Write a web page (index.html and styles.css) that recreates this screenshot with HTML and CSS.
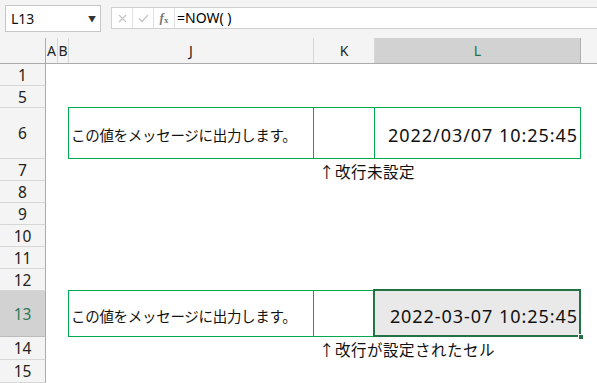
FILE: index.html
```html
<!DOCTYPE html>
<html lang="ja">
<head>
    <meta charset="UTF-8">
    <title>Book1 - Excel</title>
    <link rel="stylesheet" href="styles.css">
</head>
<body>

    <!--  Name box + formula bar  -->
    <div class="formula-bar">
        <div class="name-box">
            <span>L13</span>
            <span class="caret">&#9660;</span>
        </div>
        <div class="fx-bar">
            <span class="fx-btn">
                <svg width="9" height="9" viewBox="0 0 9 9"><path d="M1 1 L8 8 M8 1 L1 8" stroke="#c4c4c4" stroke-width="1.2" fill="none"/></svg>
            </span>
            <span class="fx-btn">
                <svg width="11" height="9" viewBox="0 0 11 9"><path d="M1 4.5 L4 7.5 L10 1" stroke="#c4c4c4" stroke-width="1.3" fill="none"/></svg>
            </span>
            <span class="fx-btn fx"><i>f</i><small>x</small></span>
            <span class="fx-input">=NOW( )</span>
        </div>
    </div>

    <!--  Sheet  -->
    <div class="sheet">
        <div class="row col-head">
            <div class="corner"></div>
            <div class="ch">A</div>
            <div class="ch">B</div>
            <div class="ch">J</div>
            <div class="ch">K</div>
            <div class="ch sel">L</div>
            <div class="ch rest"></div>
        </div>

        <div class="row"><div class="rh">1</div></div>
        <div class="row"><div class="rh">5</div></div>

        <div class="row r6">
            <div class="rh">6</div>
            <div class="box">
                <div class="cell j">この値をメッセージに出力します。</div>
                <div class="cell k"></div>
                <div class="cell l num">2022/03/07 10:25:45</div>
            </div>
        </div>

        <div class="row">
            <div class="rh">7</div>
            <div class="note">↑改行未設定</div>
        </div>

        <div class="row"><div class="rh">8</div></div>
        <div class="row"><div class="rh">9</div></div>
        <div class="row"><div class="rh">10</div></div>
        <div class="row"><div class="rh">11</div></div>
        <div class="row"><div class="rh">12</div></div>

        <div class="row r13">
            <div class="rh sel">13</div>
            <div class="box">
                <div class="cell j">この値をメッセージに出力します。</div>
                <div class="cell k"></div>
                <div class="cell l num active">2022-03-07 10:25:45<span class="handle"></span></div>
            </div>
        </div>

        <div class="row r14">
            <div class="rh">14</div>
            <div class="note">↑改行が設定されたセル</div>
        </div>

        <div class="row r15"><div class="rh">15</div></div>
    </div>

</body>
</html>
```

FILE: styles.css
```css
* {
    margin: 0;
    padding: 0;
    box-sizing: border-box;
}

body {
    width: 597px;
    height: 383px;
    overflow: hidden;
    background-color: #fff;
    font-family: "Noto Sans", "Noto Sans CJK JP", sans-serif;
    font-size: 15px;
    color: #111;
}

/*  formula bar  */

.formula-bar {
    display: flex;
    align-items: flex-start;
    gap: 10px;
    height: 38px;
    padding: 5px 0 0 5px;
    background-color: #f4f4f4;
}

.name-box {
    display: flex;
    align-items: center;
    justify-content: space-between;
    width: 96px;
    height: 27px;
    padding: 0 4px 0 5px;
    background-color: #fff;
    border: 1px solid #c6c6c6;
    font-size: 14px;
}
.name-box .caret {
    font-size: 8px;
    color: #333;
}

.fx-bar {
    display: flex;
    flex-grow: 1;
    height: 22px;
    margin-top: 2px;
    background-color: #fff;
    border: 1px solid #d0d0d0;
    border-right: 0;
}
.fx-btn {
    display: flex;
    align-items: center;
    justify-content: center;
    width: 21px;
    border-right: 1px solid #e1e1e1;
}
.fx {
    font-family: "Liberation Serif", serif;
    color: #777;
    font-size: 13px;
    font-weight: bold;
}
.fx small {
    font-size: 9px;
    margin-top: 4px;
}
.fx-input {
    padding-left: 2px;
    font-size: 14px;
    line-height: 20px;
    color: #000;
}

/*  sheet  */

.row {
    display: grid;
    grid-template-columns: 46px 12px 11px 245px 61px 206px 1fr;
    grid-template-rows: 100%;
    height: 22px;
    line-height: 18px;
}

.col-head {
    height: 26px;
    background-color: #f4f4f4;
    border-bottom: 1px solid #ababab;
}
.corner,
.ch {
    border-right: 1px solid #d7d7d7;
}
.corner {
    border-right-color: #ababab;
}
.ch {
    display: flex;
    align-items: center;
    justify-content: center;
    font-size: 14px;
    color: #222;
}
.ch.sel {
    background-color: #d2d2d2;
    color: #217346;
    border-right-color: #b0b0b0;
}
.ch.rest {
    border-right: 0;
}

.rh {
    display: flex;
    align-items: center;
    justify-content: center;
    background-color: #f4f4f4;
    border-right: 1px solid #ababab;
    border-bottom: 1px solid #d7d7d7;
    font-size: 15.5px;
    color: #222;
}
.rh.sel {
    background-color: #d2d2d2;
    color: #2b7a5a;
    border-bottom-color: #bdbdbd;
}

.r6 {
    height: 51px;
}
.r13 {
    height: 46px;
}
.r14,
.r15 {
    height: 23px;
}

/*  bordered block J:L  */

.box {
    grid-column: 4 / 7;
    display: grid;
    grid-template-columns: 245px 61px 1fr;
    margin: -1px 0 0 -1px;
    border: 1px solid #00a84f;
}
.cell {
    display: flex;
    align-items: center;
    padding-top: 4px;
    white-space: nowrap;
}
.cell.j,
.cell.k {
    border-right: 1px solid #00a84f;
}
.cell.j {
    padding-left: 2px;
    font-family: "Noto Sans CJK JP", sans-serif;
    font-size: 14.5px;
    letter-spacing: -0.3px;
}
.cell.num {
    justify-content: flex-end;
    padding-right: 2px;
    font-size: 18px;
    letter-spacing: 0.95px;
}
.cell.active {
    position: relative;
    background-color: #e9e9e9;
}
.cell.active::after {
    content: "";
    position: absolute;
    top: -2px;
    left: -2px;
    right: -1px;
    bottom: -1px;
    border: 2px solid #217346;
}
.handle {
    position: absolute;
    right: -4px;
    bottom: -4px;
    width: 6px;
    height: 6px;
    background-color: #217346;
    border: 1px solid #fff;
    z-index: 1;
}

.note {
    grid-column: 5 / 8;
    padding: 2px 0 0 5px;
    font-family: "Noto Sans CJK JP", sans-serif;
    font-size: 15.5px;
    line-height: 20px;
    letter-spacing: 0.5px;
    white-space: nowrap;
}
```
